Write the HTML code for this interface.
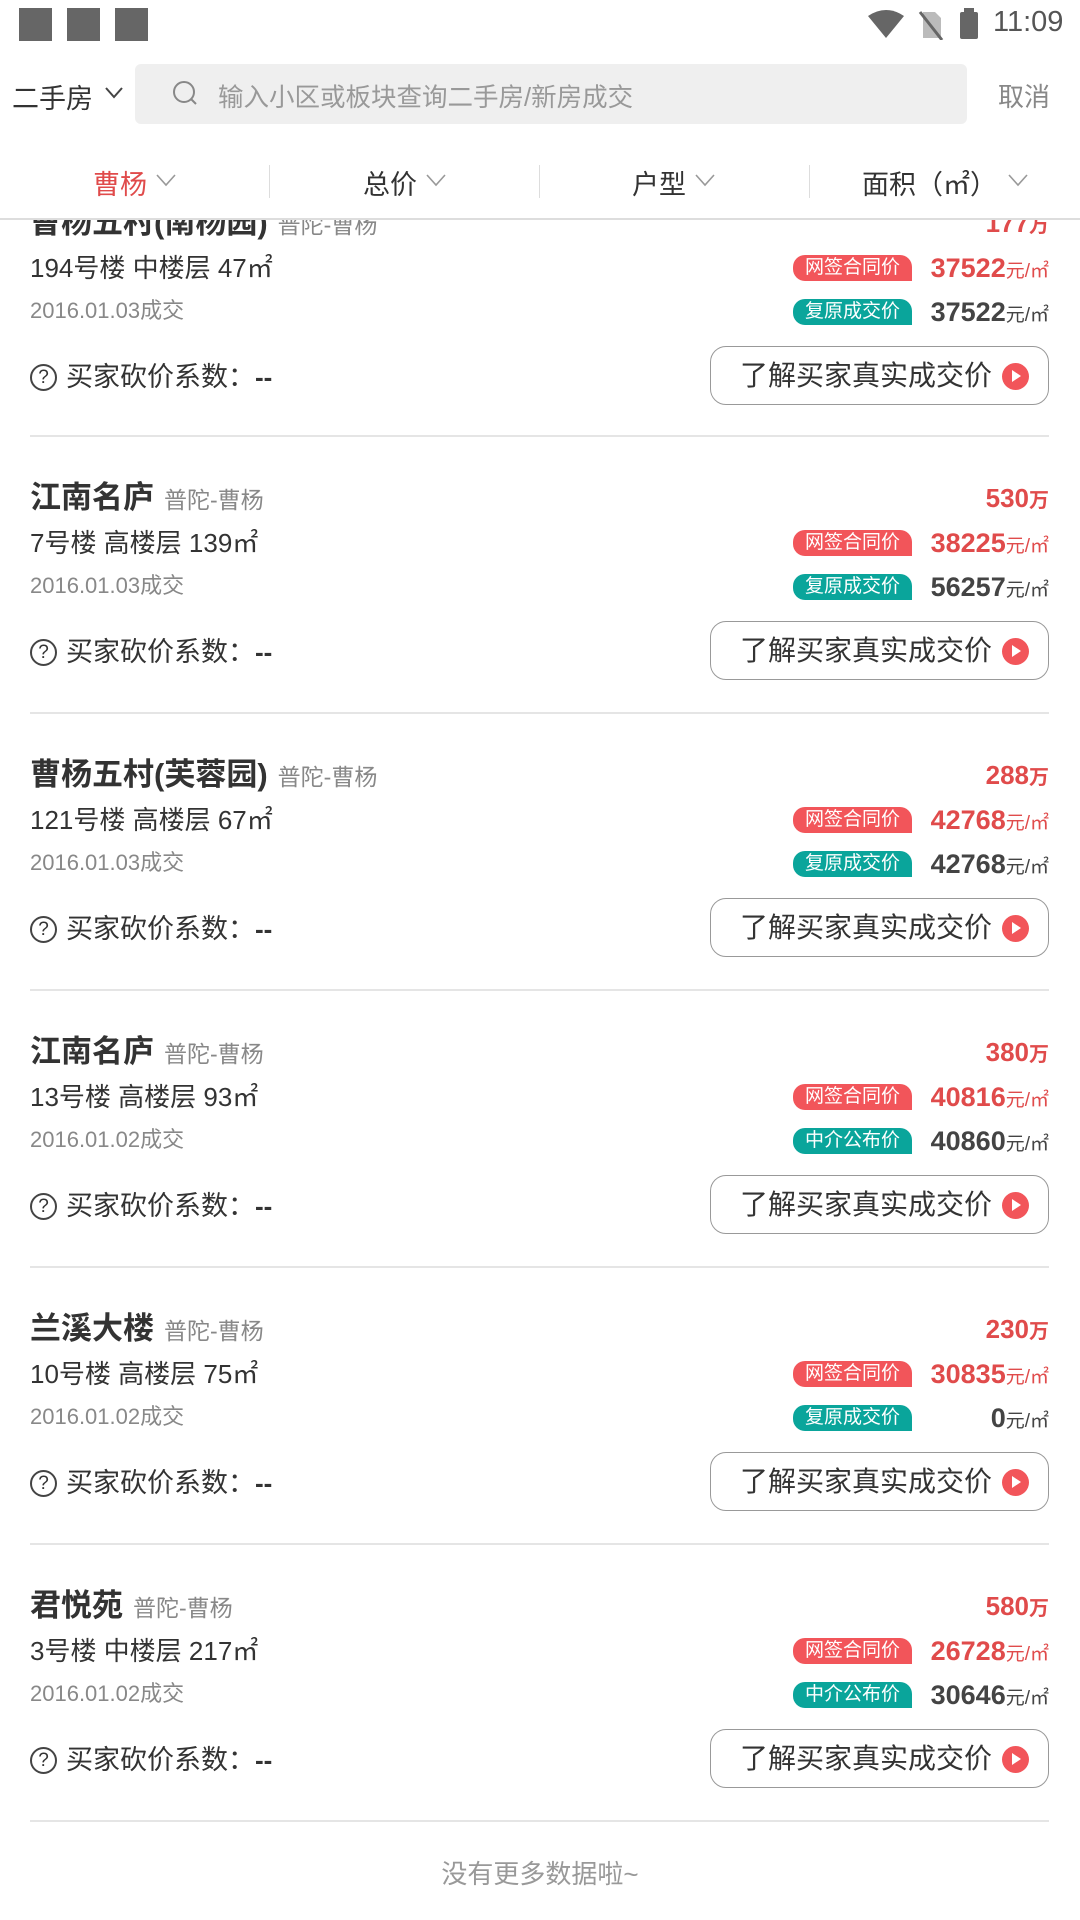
<!DOCTYPE html>
<html><head><meta charset="utf-8"><style>
*{margin:0;padding:0;box-sizing:border-box}
body{width:1080px;height:1920px;background:#fff;font-family:"Liberation Sans","Noto Sans CJK SC",sans-serif;position:relative;overflow:hidden;color:#333}
.a{position:absolute;white-space:nowrap}
.sq{position:absolute;top:8px;width:33px;height:33px;background:#666}
.card{position:absolute;left:0;width:1080px;height:277px}
.t{left:30px;font-size:31px;font-weight:bold;color:#333;line-height:36px}
.t span{font-size:23px;font-weight:normal;color:#888;margin-left:10px}
.l2{left:30px;font-size:26px;color:#333;line-height:30px}
.dt{left:30px;font-size:22px;color:#888;line-height:26px}
.q{left:30px;font-size:27px;color:#333;line-height:32px}
.q b{font-size:26px}
.qi{display:inline-block;width:27px;height:27px;border:2px solid #444;border-radius:50%;font-size:19px;text-align:center;line-height:23px;vertical-align:3px;margin-right:9px;font-weight:normal}
.wan{right:31px;font-size:26px;font-weight:bold;color:#e04b4b;text-align:right;line-height:30px}
.wan small{font-size:20px}
.tag{left:793px;width:119px;height:26px;border-radius:12px 12px 0 12px;color:#fff;font-size:19px;text-align:center;line-height:26px}
.red{background:#f2555a}.grn{background:#0aa59b}
.pr{right:31px;font-size:27px;font-weight:bold;line-height:30px;text-align:right}
.pr small{font-size:19px;font-weight:normal}
.btn{left:710px;width:339px;height:59px;border:1.5px solid #999;border-radius:16px;font-size:28px;color:#333;line-height:58px;padding-left:29px}
.btn i{position:absolute;right:19px;top:16px;width:27px;height:27px;border-radius:50%;background:#f2555a}
.btn i:after{content:"";position:absolute;left:10px;top:7px;border-left:9px solid #fff;border-top:6px solid transparent;border-bottom:6px solid transparent}
.sep{left:30px;width:1019px;height:2px;background:#e5e5e5}
</style></head><body>
<div class="sq" style="left:19px"></div><div class="sq" style="left:67px"></div><div class="sq" style="left:115px"></div>
<svg class="a" style="left:866px;top:10px" width="40" height="28" viewBox="0 0 40 28"><path d="M2 6 Q20 -6 38 6 L20 28Z" fill="#666"/></svg>
<svg class="a" style="left:918px;top:10px" width="26" height="30" viewBox="0 0 26 30"><path d="M5 2h12l6 6v20H5z" fill="#bbb"/><path d="M2 2l22 28" stroke="#666" stroke-width="3"/></svg>
<div class="a" style="left:960px;top:12px;width:18px;height:27px;background:#666;border-radius:2px"></div>
<div class="a" style="left:964px;top:8px;width:10px;height:5px;background:#666"></div>
<div class="a" style="left:993px;top:6px;font-size:29px;color:#555">11:09</div>

<div class="a" style="left:12px;top:77px;font-size:27px;color:#333">二手房</div>
<svg class="a" style="left:104px;top:86px" width="20" height="14"><path d="M2 2l8 9 8-9" fill="none" stroke="#444" stroke-width="2"/></svg>
<div class="a" style="left:135px;top:64px;width:832px;height:60px;background:#efefef;border-radius:6px"></div>
<svg class="a" style="left:172px;top:80px" width="28" height="30"><circle cx="12" cy="12" r="10" fill="none" stroke="#888" stroke-width="2"/><path d="M19 19l5 5" stroke="#888" stroke-width="2"/></svg>
<div class="a" style="left:218px;top:77px;font-size:25.5px;color:#999">输入小区或板块查询二手房/新房成交</div>
<div class="a" style="left:998px;top:77px;font-size:26px;color:#888">取消</div>

<div class="a" style="left:93px;top:163px;font-size:27px;color:#e04b4b">曹杨</div>
<div class="a" style="left:363px;top:163px;font-size:27px;color:#333">总价</div>
<div class="a" style="left:632px;top:163px;font-size:27px;color:#333">户型</div>
<div class="a" style="left:862px;top:163px;font-size:27px;color:#333">面积（㎡）</div>
<svg class="a" style="left:155px;top:173px" width="22" height="14"><path d="M2 2l9 10 9-10" fill="none" stroke="#999" stroke-width="1.6"/></svg>
<svg class="a" style="left:425px;top:173px" width="22" height="14"><path d="M2 2l9 10 9-10" fill="none" stroke="#999" stroke-width="1.6"/></svg>
<svg class="a" style="left:694px;top:173px" width="22" height="14"><path d="M2 2l9 10 9-10" fill="none" stroke="#999" stroke-width="1.6"/></svg>
<svg class="a" style="left:1007px;top:173px" width="22" height="14"><path d="M2 2l9 10 9-10" fill="none" stroke="#999" stroke-width="1.6"/></svg>
<div class="a" style="left:269px;top:165px;width:1px;height:33px;background:#ddd"></div>
<div class="a" style="left:539px;top:165px;width:1px;height:33px;background:#ddd"></div>
<div class="a" style="left:809px;top:165px;width:1px;height:33px;background:#ddd"></div>

<div class="a" style="left:0;top:220px;width:1080px;height:1700px;overflow:hidden">
<div class="a" style="left:0;top:-220px;width:1080px;height:1920px">

<div class="card" style="top:205px">
<div class="a t" style="top:0">曹杨五村(南杨园)<span>普陀-曹杨</span></div>
<div class="a wan" style="top:3px">177<small>万</small></div>
<div class="a l2" style="top:48px">194号楼 中楼层 47㎡</div>
<div class="a tag red" style="top:50px">网签合同价</div><div class="a pr" style="top:48px;color:#e04b4b">37522<small>元/㎡</small></div>
<div class="a dt" style="top:93px">2016.01.03成交</div>
<div class="a tag grn" style="top:94px">复原成交价</div><div class="a pr" style="top:92px;color:#444">37522<small>元/㎡</small></div>
<div class="a q" style="top:156px"><span class="qi">?</span>买家砍价系数：<b>--</b></div>
<div class="a btn" style="top:141px">了解买家真实成交价<i></i></div>
<div class="a sep" style="top:230px"></div>
</div>

<div class="card" style="top:480px">
<div class="a t" style="top:0">江南名庐<span>普陀-曹杨</span></div>
<div class="a wan" style="top:3px">530<small>万</small></div>
<div class="a l2" style="top:48px">7号楼 高楼层 139㎡</div>
<div class="a tag red" style="top:50px">网签合同价</div><div class="a pr" style="top:48px;color:#e04b4b">38225<small>元/㎡</small></div>
<div class="a dt" style="top:93px">2016.01.03成交</div>
<div class="a tag grn" style="top:94px">复原成交价</div><div class="a pr" style="top:92px;color:#444">56257<small>元/㎡</small></div>
<div class="a q" style="top:156px"><span class="qi">?</span>买家砍价系数：<b>--</b></div>
<div class="a btn" style="top:141px">了解买家真实成交价<i></i></div>
<div class="a sep" style="top:232px"></div>
</div>

<div class="card" style="top:757px">
<div class="a t" style="top:0">曹杨五村(芙蓉园)<span>普陀-曹杨</span></div>
<div class="a wan" style="top:3px">288<small>万</small></div>
<div class="a l2" style="top:48px">121号楼 高楼层 67㎡</div>
<div class="a tag red" style="top:50px">网签合同价</div><div class="a pr" style="top:48px;color:#e04b4b">42768<small>元/㎡</small></div>
<div class="a dt" style="top:93px">2016.01.03成交</div>
<div class="a tag grn" style="top:94px">复原成交价</div><div class="a pr" style="top:92px;color:#444">42768<small>元/㎡</small></div>
<div class="a q" style="top:156px"><span class="qi">?</span>买家砍价系数：<b>--</b></div>
<div class="a btn" style="top:141px">了解买家真实成交价<i></i></div>
<div class="a sep" style="top:232px"></div>
</div>

<div class="card" style="top:1034px">
<div class="a t" style="top:0">江南名庐<span>普陀-曹杨</span></div>
<div class="a wan" style="top:3px">380<small>万</small></div>
<div class="a l2" style="top:48px">13号楼 高楼层 93㎡</div>
<div class="a tag red" style="top:50px">网签合同价</div><div class="a pr" style="top:48px;color:#e04b4b">40816<small>元/㎡</small></div>
<div class="a dt" style="top:93px">2016.01.02成交</div>
<div class="a tag grn" style="top:94px">中介公布价</div><div class="a pr" style="top:92px;color:#444">40860<small>元/㎡</small></div>
<div class="a q" style="top:156px"><span class="qi">?</span>买家砍价系数：<b>--</b></div>
<div class="a btn" style="top:141px">了解买家真实成交价<i></i></div>
<div class="a sep" style="top:232px"></div>
</div>

<div class="card" style="top:1311px">
<div class="a t" style="top:0">兰溪大楼<span>普陀-曹杨</span></div>
<div class="a wan" style="top:3px">230<small>万</small></div>
<div class="a l2" style="top:48px">10号楼 高楼层 75㎡</div>
<div class="a tag red" style="top:50px">网签合同价</div><div class="a pr" style="top:48px;color:#e04b4b">30835<small>元/㎡</small></div>
<div class="a dt" style="top:93px">2016.01.02成交</div>
<div class="a tag grn" style="top:94px">复原成交价</div><div class="a pr" style="top:92px;color:#444">0<small>元/㎡</small></div>
<div class="a q" style="top:156px"><span class="qi">?</span>买家砍价系数：<b>--</b></div>
<div class="a btn" style="top:141px">了解买家真实成交价<i></i></div>
<div class="a sep" style="top:232px"></div>
</div>

<div class="card" style="top:1588px">
<div class="a t" style="top:0">君悦苑<span>普陀-曹杨</span></div>
<div class="a wan" style="top:3px">580<small>万</small></div>
<div class="a l2" style="top:48px">3号楼 中楼层 217㎡</div>
<div class="a tag red" style="top:50px">网签合同价</div><div class="a pr" style="top:48px;color:#e04b4b">26728<small>元/㎡</small></div>
<div class="a dt" style="top:93px">2016.01.02成交</div>
<div class="a tag grn" style="top:94px">中介公布价</div><div class="a pr" style="top:92px;color:#444">30646<small>元/㎡</small></div>
<div class="a q" style="top:156px"><span class="qi">?</span>买家砍价系数：<b>--</b></div>
<div class="a btn" style="top:141px">了解买家真实成交价<i></i></div>
<div class="a sep" style="top:232px"></div>
</div>

</div></div>
<div class="a" style="left:0;top:218px;width:1080px;height:2px;background:#ddd"></div>
<div class="a" style="left:0;top:1854px;width:1080px;text-align:center;font-size:26px;color:#999">没有更多数据啦~</div>
</body></html>
